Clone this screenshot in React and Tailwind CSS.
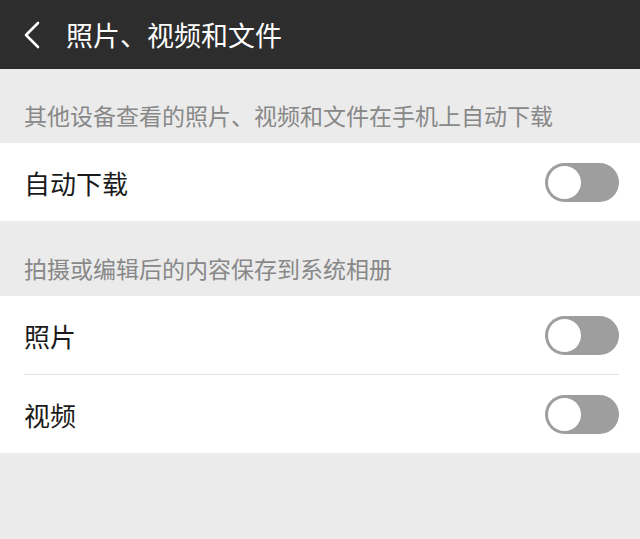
import { useState } from "react";

function Toggle({ on, onClick }) {
  return (
    <button
      onClick={onClick}
      className={`relative w-[74px] h-[39px] rounded-full ${on ? "bg-[#1aad19]" : "bg-[#9e9e9e]"}`}
    >
      <span
        className={`absolute top-[3px] ${on ? "left-[38px]" : "left-[3px]"} w-[33px] h-[33px] rounded-full bg-white`}
      />
    </button>
  );
}

function Row({ label, on, onClick, divider }) {
  return (
    <div className="bg-white pl-6 pr-[21px]">
      <div
        className={`flex items-center justify-between ${divider ? "h-[79px] border-b border-[#e3e3e3]" : "h-[78px]"}`}
      >
        <span className="text-[26px] text-[#1a1a1a]">{label}</span>
        <Toggle on={on} onClick={onClick} />
      </div>
    </div>
  );
}

export default function App() {
  const [auto, setAuto] = useState(false);
  const [photo, setPhoto] = useState(false);
  const [video, setVideo] = useState(false);

  return (
    <div
      className="w-[640px] h-[539px] bg-[#ebebeb] overflow-hidden"
      style={{ fontFamily: '"Noto Sans CJK SC", "Noto Sans", sans-serif' }}
    >
      {/* 顶栏 */}
      <div className="h-[69px] bg-[#2d2d2d] flex items-center text-white">
        <svg className="ml-[22px] w-[20px] h-[30px]" viewBox="0 0 20 30" fill="none">
          <path d="M16 3 L4 15 L16 27" stroke="white" strokeWidth="2.6" strokeLinecap="round" strokeLinejoin="round" />
        </svg>
        <span className="ml-[24px] text-[27px] leading-none">照片、视频和文件</span>
      </div>

      <div className="h-[74px] flex items-end pb-[11px] pl-6 text-[23px] text-[#888888]">
        其他设备查看的照片、视频和文件在手机上自动下载
      </div>
      <Row label="自动下载" on={auto} onClick={() => setAuto(!auto)} />

      <div className="h-[75px] flex items-end pb-[11px] pl-6 text-[23px] text-[#888888]">
        拍摄或编辑后的内容保存到系统相册
      </div>
      <Row label="照片" on={photo} onClick={() => setPhoto(!photo)} divider />
      <Row label="视频" on={video} onClick={() => setVideo(!video)} />
    </div>
  );
}
